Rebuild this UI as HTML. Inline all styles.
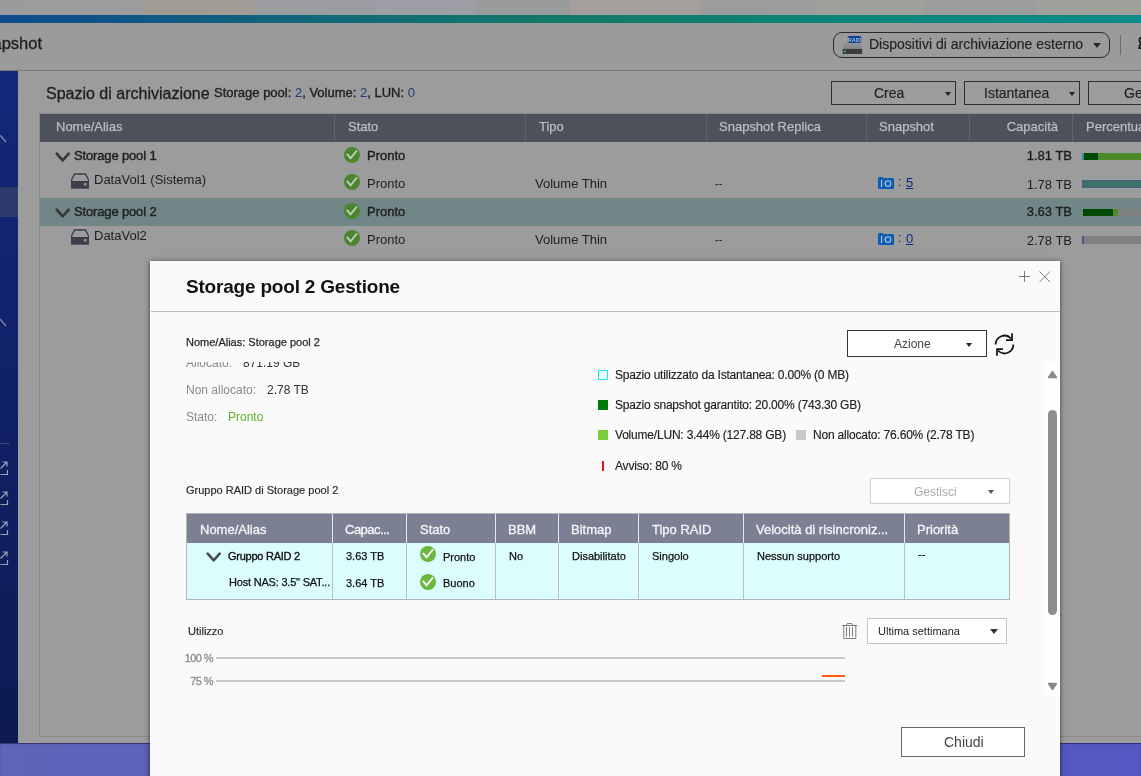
<!DOCTYPE html>
<html><head><meta charset="utf-8">
<style>
*{box-sizing:border-box;margin:0;padding:0}
html,body{width:1141px;height:776px;overflow:hidden;font-family:"Liberation Sans",sans-serif;background:#9b9b9b}
.b{position:absolute}
.t{position:absolute;white-space:nowrap}
#page{position:absolute;left:0;top:0;width:1141px;height:776px;overflow:hidden;will-change:transform}
</style></head>
<body><div id="page">
<div class="b" style="left:0px;top:0px;width:1141px;height:15px;background:#9a9b9d"></div><div class="b" style="left:25px;top:0px;width:120px;height:15px;background:#9b9c9e"></div><div class="b" style="left:145px;top:0px;width:110px;height:15px;background:#a09b95"></div><div class="b" style="left:255px;top:0px;width:115px;height:15px;background:#9b9c9f"></div><div class="b" style="left:370px;top:0px;width:105px;height:15px;background:#9d9da6"></div><div class="b" style="left:475px;top:0px;width:95px;height:15px;background:#9a9b9d"></div><div class="b" style="left:570px;top:0px;width:130px;height:15px;background:#a49e9d"></div><div class="b" style="left:700px;top:0px;width:115px;height:15px;background:#9a9c9e"></div><div class="b" style="left:815px;top:0px;width:110px;height:15px;background:#9ea09a"></div><div class="b" style="left:925px;top:0px;width:110px;height:15px;background:#9a9c9e"></div><div class="b" style="left:1035px;top:0px;width:106px;height:15px;background:#9fa09b"></div><div class="b" style="left:0px;top:15px;width:1141px;height:8px;background:linear-gradient(90deg,#0f4a8e 0%,#116a78 30%,#127a66 50%,#0c8578 75%,#0a8c8c 100%)"></div><div class="b" style="left:0px;top:23px;width:1141px;height:48px;background:#9b9b9b"></div><div class="b" style="left:0px;top:70px;width:1141px;height:1px;background:#7a7a7a"></div><div class="b" style="left:833px;top:32px;width:277px;height:26px;border:1px solid #2a2a2a;border-radius:9px"></div><div class="b" style="left:1093px;top:43px;width:0;height:0;border-left:4px solid transparent;border-right:4px solid transparent;border-top:5px solid #2a2a2a"></div><div class="b" style="left:1120px;top:35px;width:1px;height:20px;background:#6e6a66"></div><svg class="b" style="left:1136px;top:35px" width="8" height="15" viewBox="0 0 8 15"><circle cx="6" cy="5.2" r="2.6" fill="none" stroke="#111" stroke-width="1.7"/><path d="M3.3 13.2 Q3.3 8.6 6 8.6 Q8.7 8.6 8.7 13.2 Z" fill="none" stroke="#111" stroke-width="1.7"/></svg><svg class="b" style="left:842px;top:36px" width="21" height="19" viewBox="0 0 21 19"><defs><linearGradient id="dg" x1="0" y1="0" x2="0" y2="1"><stop offset="0" stop-color="#a2a6aa"/><stop offset="1" stop-color="#7e8286"/></linearGradient></defs><path d="M2.2 2.7 H18.8 L20 13 H0.8 Z" fill="url(#dg)"/><rect x="0.7" y="13" width="19.5" height="5" fill="#3a3b3d"/><rect x="2" y="14.7" width="2" height="1.6" fill="#4fb83a"/><rect x="5.8" y="0" width="13.5" height="7" rx="1.8" fill="#0b3f8f"/><text x="12.5" y="5.6" font-family="Liberation Sans" font-size="5.5" font-weight="bold" fill="#aab8d6" text-anchor="middle">RAID</text></svg><div class="b" style="left:0px;top:71px;width:18px;height:673px;background:linear-gradient(180deg,#13287a 0%,#112166 50%,#0d1a52 100%)"></div><div class="b" style="left:0px;top:187px;width:18px;height:30px;background:#2d3a6e"></div><svg class="b" style="left:0;top:130px" width="10" height="16"><path d="M-1 4 L6 12" stroke="#8f95ad" stroke-width="1.2"/></svg><svg class="b" style="left:0;top:314px" width="10" height="16"><path d="M-1 4 L6 12" stroke="#8f95ad" stroke-width="1.2"/></svg><div class="b" style="left:0px;top:443px;width:10px;height:1px;background:#3a4570"></div><svg class="b" style="left:0;top:461px" width="10" height="14"><path d="M0.5 13.5 H7.5 V9 M0.5 7.5 L7 1 M2.5 1 H7 V5.5" fill="none" stroke="#9ea3b8" stroke-width="1.2"/></svg><svg class="b" style="left:0;top:491px" width="10" height="14"><path d="M0.5 13.5 H7.5 V9 M0.5 7.5 L7 1 M2.5 1 H7 V5.5" fill="none" stroke="#9ea3b8" stroke-width="1.2"/></svg><svg class="b" style="left:0;top:521px" width="10" height="14"><path d="M0.5 13.5 H7.5 V9 M0.5 7.5 L7 1 M2.5 1 H7 V5.5" fill="none" stroke="#9ea3b8" stroke-width="1.2"/></svg><svg class="b" style="left:0;top:551px" width="10" height="14"><path d="M0.5 13.5 H7.5 V9 M0.5 7.5 L7 1 M2.5 1 H7 V5.5" fill="none" stroke="#9ea3b8" stroke-width="1.2"/></svg><div class="b" style="left:18px;top:71px;width:1123px;height:673px;background:#9c9c9c"></div><div class="b" style="left:39px;top:113px;width:1102px;height:624px;border:1px solid #8a8a8a;border-right:none"></div><div class="b" style="left:831px;top:81px;width:125px;height:24px;border:1px solid #2e2e2e"></div><div class="b" style="left:964px;top:81px;width:116px;height:24px;border:1px solid #2e2e2e"></div><div class="b" style="left:1088px;top:81px;width:80px;height:24px;border:1px solid #2e2e2e"></div><div class="b" style="left:945px;top:92px;width:0;height:0;border-left:3px solid transparent;border-right:3px solid transparent;border-top:4px solid #222"></div><div class="b" style="left:1069px;top:92px;width:0;height:0;border-left:3px solid transparent;border-right:3px solid transparent;border-top:4px solid #222"></div><div class="b" style="left:40px;top:114px;width:1101px;height:28px;background:#4c515b"></div><div class="b" style="left:334px;top:114px;width:1px;height:28px;background:#5f646d"></div><div class="b" style="left:525px;top:114px;width:1px;height:28px;background:#5f646d"></div><div class="b" style="left:706px;top:114px;width:1px;height:28px;background:#5f646d"></div><div class="b" style="left:866px;top:114px;width:1px;height:28px;background:#5f646d"></div><div class="b" style="left:969px;top:114px;width:1px;height:28px;background:#5f646d"></div><div class="b" style="left:1072px;top:114px;width:1px;height:28px;background:#5f646d"></div><div class="b" style="left:40px;top:198px;width:1101px;height:28px;background:#718787"></div><svg class="b" style="left:344px;top:147px" width="16" height="16" viewBox="0 0 16 16"><circle cx="8" cy="8" r="8" fill="#4a8530"/><path d="M3.3 7.4 L6.6 11.4 L12.5 4" stroke="#c3d3bb" stroke-width="1.8" fill="none" stroke-linecap="round" stroke-linejoin="miter"/></svg><svg class="b" style="left:55px;top:151px" width="16" height="12" viewBox="0 0 16 12"><path d="M1.7 2.7 L7.7 9.4 L13.7 2.7" stroke="#383838" stroke-width="2.7" fill="none" stroke-linecap="round" stroke-linejoin="round"/></svg><svg class="b" style="left:344px;top:174px" width="16" height="16" viewBox="0 0 16 16"><circle cx="8" cy="8" r="8" fill="#4a8530"/><path d="M3.3 7.4 L6.6 11.4 L12.5 4" stroke="#c3d3bb" stroke-width="1.8" fill="none" stroke-linecap="round" stroke-linejoin="miter"/></svg><svg class="b" style="left:71px;top:173px" width="18" height="16" viewBox="0 0 18 16"><path d="M3.5 1 L14.5 1 L17.5 7 L17.5 15 L0.5 15 L0.5 7 Z" fill="none" stroke="#3b3f4a" stroke-width="1.3"/><rect x="0.5" y="8" width="17" height="7" fill="#3b3f4a"/><rect x="13" y="10" width="2.5" height="2.5" fill="#9c9c9c"/></svg><svg class="b" style="left:344px;top:203px" width="16" height="16" viewBox="0 0 16 16"><circle cx="8" cy="8" r="8" fill="#4a8530"/><path d="M3.3 7.4 L6.6 11.4 L12.5 4" stroke="#c3d3bb" stroke-width="1.8" fill="none" stroke-linecap="round" stroke-linejoin="miter"/></svg><svg class="b" style="left:55px;top:207px" width="16" height="12" viewBox="0 0 16 12"><path d="M1.7 2.7 L7.7 9.4 L13.7 2.7" stroke="#383838" stroke-width="2.7" fill="none" stroke-linecap="round" stroke-linejoin="round"/></svg><svg class="b" style="left:344px;top:230px" width="16" height="16" viewBox="0 0 16 16"><circle cx="8" cy="8" r="8" fill="#4a8530"/><path d="M3.3 7.4 L6.6 11.4 L12.5 4" stroke="#c3d3bb" stroke-width="1.8" fill="none" stroke-linecap="round" stroke-linejoin="miter"/></svg><svg class="b" style="left:71px;top:229px" width="18" height="16" viewBox="0 0 18 16"><path d="M3.5 1 L14.5 1 L17.5 7 L17.5 15 L0.5 15 L0.5 7 Z" fill="none" stroke="#3b3f4a" stroke-width="1.3"/><rect x="0.5" y="8" width="17" height="7" fill="#3b3f4a"/><rect x="13" y="10" width="2.5" height="2.5" fill="#9c9c9c"/></svg><svg class="b" style="left:878px;top:177px" width="16" height="12" viewBox="0 0 16 12"><path d="M0 1.2 Q0 0 1.2 0 L4.5 0 L5.5 1 L15 1 Q16 1 16 2 L16 11 Q16 12 15 12 L1 12 Q0 12 0 11 Z" fill="#0f5cb4"/><rect x="3" y="3" width="1.1" height="7" fill="#b9c6da"/><circle cx="10" cy="6.5" r="2.8" fill="none" stroke="#b9c6da" stroke-width="1.1"/></svg><svg class="b" style="left:878px;top:233px" width="16" height="12" viewBox="0 0 16 12"><path d="M0 1.2 Q0 0 1.2 0 L4.5 0 L5.5 1 L15 1 Q16 1 16 2 L16 11 Q16 12 15 12 L1 12 Q0 12 0 11 Z" fill="#0f5cb4"/><rect x="3" y="3" width="1.1" height="7" fill="#b9c6da"/><circle cx="10" cy="6.5" r="2.8" fill="none" stroke="#b9c6da" stroke-width="1.1"/></svg><div class="b" style="left:1082px;top:153px;width:2px;height:7px;background:#2196a6"></div><div class="b" style="left:1084px;top:153px;width:14px;height:7px;background:#004a00"></div><div class="b" style="left:1098px;top:153px;width:43px;height:7px;background:#4e8a2a"></div><div class="b" style="left:1082px;top:180px;width:70px;height:8px;background:#3d7366;border:1px solid #4a5a8f"></div><div class="b" style="left:1083px;top:209px;width:30px;height:7px;background:#004a00"></div><div class="b" style="left:1113px;top:209px;width:5px;height:7px;background:#4e8a2a"></div><div class="b" style="left:1118px;top:209px;width:23px;height:7px;background:#808080"></div><div class="b" style="left:1082px;top:236px;width:2px;height:8px;background:#4a5a8f"></div><div class="b" style="left:1084px;top:236px;width:57px;height:8px;background:#808080"></div><div class="b" style="left:0px;top:743px;width:1141px;height:33px;background:linear-gradient(90deg,#5e64b8,#5a60bc 50%,#5358c2);box-shadow:inset 0 1px 1px rgba(0,0,40,0.5)"></div>
<div class="t" style="left:-7.5px;top:35px;font-size:16.5px;line-height:16px;color:#1e1e1e;-webkit-text-stroke:0.3px #1e1e1e">apshot</div><div class="t" style="left:869px;top:37px;font-size:14px;line-height:14px;font-weight:normal;color:#222;-webkit-text-stroke:0.15px #222">Dispositivi di archiviazione esterno</div><div class="t" style="left:46px;top:86px;font-size:16px;line-height:16px;font-weight:normal;color:#1e1e1e;-webkit-text-stroke:0.3px #1e1e1e">Spazio di archiviazione</div><div class="t" style="left:214px;top:86px;font-size:13px;line-height:13px;color:#1e1e1e;-webkit-text-stroke:0.35px #1e1e1e">Storage pool: <span style="color:#1d3978;-webkit-text-stroke:0">2</span>, Volume: <span style="color:#1d3978;-webkit-text-stroke:0">2</span>, LUN: <span style="color:#1d3978;-webkit-text-stroke:0">0</span></div><div class="t" style="left:874px;top:86px;font-size:14px;line-height:14px;font-weight:normal;color:#222;-webkit-text-stroke:0.15px #222">Crea</div><div class="t" style="left:984px;top:86px;font-size:14px;line-height:14px;font-weight:normal;color:#222;-webkit-text-stroke:0.15px #222">Istantanea</div><div class="t" style="left:1124px;top:86px;font-size:14px;line-height:14px;font-weight:normal;color:#222;-webkit-text-stroke:0.15px #222">Ge</div><div class="t" style="left:56px;top:120px;font-size:13px;line-height:13px;font-weight:normal;color:#bcbec2;-webkit-text-stroke:0.25px #bcbec2">Nome/Alias</div><div class="t" style="left:348px;top:120px;font-size:13px;line-height:13px;font-weight:normal;color:#bcbec2;-webkit-text-stroke:0.25px #bcbec2">Stato</div><div class="t" style="left:539px;top:120px;font-size:13px;line-height:13px;font-weight:normal;color:#bcbec2;-webkit-text-stroke:0.25px #bcbec2">Tipo</div><div class="t" style="left:719px;top:120px;font-size:13px;line-height:13px;font-weight:normal;color:#bcbec2;-webkit-text-stroke:0.25px #bcbec2">Snapshot Replica</div><div class="t" style="left:879px;top:120px;font-size:13px;line-height:13px;font-weight:normal;color:#bcbec2;-webkit-text-stroke:0.25px #bcbec2">Snapshot</div><div class="t" style="left:958px;top:120px;width:100px;text-align:right;font-size:13px;line-height:13px;color:#bcbec2;-webkit-text-stroke:0.25px #bcbec2">Capacità</div><div class="t" style="left:1086px;top:120px;font-size:13px;line-height:13px;font-weight:normal;color:#bcbec2;-webkit-text-stroke:0.25px #bcbec2">Percentuale</div><div class="t" style="left:74px;top:149px;font-size:13px;line-height:13px;font-weight:normal;color:#1e1e1e;letter-spacing:-0.15px;-webkit-text-stroke:0.4px #1e1e1e">Storage pool 1</div><div class="t" style="left:367px;top:149px;font-size:13px;line-height:13px;font-weight:normal;color:#1e1e1e;-webkit-text-stroke:0.4px #1e1e1e">Pronto</div><div class="t" style="left:94px;top:173px;font-size:13px;line-height:13px;font-weight:normal;color:#1e1e1e;">DataVol1 (Sistema)</div><div class="t" style="left:367px;top:177px;font-size:13px;line-height:13px;font-weight:normal;color:#1e1e1e;">Pronto</div><div class="t" style="left:535px;top:177px;font-size:13px;line-height:13px;font-weight:normal;color:#1e1e1e;">Volume Thin</div><div class="t" style="left:715px;top:178px;font-size:11px;line-height:11px;font-weight:normal;color:#1e1e1e;">--</div><div class="t" style="left:74px;top:205px;font-size:13px;line-height:13px;font-weight:normal;color:#1e1e1e;letter-spacing:-0.15px;-webkit-text-stroke:0.4px #1e1e1e">Storage pool 2</div><div class="t" style="left:367px;top:205px;font-size:13px;line-height:13px;font-weight:normal;color:#1e1e1e;-webkit-text-stroke:0.4px #1e1e1e">Pronto</div><div class="t" style="left:94px;top:229px;font-size:13px;line-height:13px;font-weight:normal;color:#1e1e1e;">DataVol2</div><div class="t" style="left:367px;top:233px;font-size:13px;line-height:13px;font-weight:normal;color:#1e1e1e;">Pronto</div><div class="t" style="left:535px;top:233px;font-size:13px;line-height:13px;font-weight:normal;color:#1e1e1e;">Volume Thin</div><div class="t" style="left:715px;top:234px;font-size:11px;line-height:11px;font-weight:normal;color:#1e1e1e;">--</div><div class="t" style="left:898px;top:176px;font-size:12px;line-height:12px;font-weight:normal;color:#1e1e1e;">:</div><div class="t" style="left:906px;top:176px;font-size:13px;line-height:13px;font-weight:normal;color:#10288a;"><u>5</u></div><div class="t" style="left:898px;top:232px;font-size:12px;line-height:12px;font-weight:normal;color:#1e1e1e;">:</div><div class="t" style="left:906px;top:232px;font-size:13px;line-height:13px;font-weight:normal;color:#10288a;"><u>0</u></div><div class="t" style="left:971px;top:149px;width:101px;text-align:right;font-size:13px;line-height:13px;color:#1e1e1e;-webkit-text-stroke:0.35px #1e1e1e">1.81 TB</div><div class="t" style="left:971px;top:178px;width:101px;text-align:right;font-size:13px;line-height:13px;color:#1e1e1e;">1.78 TB</div><div class="t" style="left:971px;top:205px;width:101px;text-align:right;font-size:13px;line-height:13px;color:#1e1e1e;-webkit-text-stroke:0.35px #1e1e1e">3.63 TB</div><div class="t" style="left:971px;top:234px;width:101px;text-align:right;font-size:13px;line-height:13px;color:#1e1e1e;">2.78 TB</div>
<div class="b" style="left:150px;top:261px;width:910px;height:520px;background:#fafafa;box-shadow:0 1px 4px rgba(0,0,0,0.6),0 0 9px rgba(0,0,0,0.12);border:1px solid #fdfdfd"></div><svg class="b" style="left:1019px;top:271px" width="32" height="12" viewBox="0 0 32 12"><path d="M5.5 0 V11 M0 5.5 H11" stroke="#7a7a7a" stroke-width="1"/><path d="M20.5 0.5 L31 11 M31 0.5 L20.5 11" stroke="#7a7a7a" stroke-width="1"/></svg><div class="b" style="left:151px;top:311px;width:909px;height:1px;background:#bdbdbd"></div><div class="b" style="left:847px;top:330px;width:140px;height:27px;background:#fff;border:1px solid #333"></div><div class="b" style="left:966px;top:343px;width:0;height:0;border-left:3px solid transparent;border-right:3px solid transparent;border-top:4px solid #222"></div><svg class="b" style="left:994px;top:332px" width="24" height="26" viewBox="0 0 24 26"><path d="M1.7 12.5 A8.8 8.8 0 0 1 17 6.5" fill="none" stroke="#151515" stroke-width="1.75"/><path d="M18 1.2 V8 H12" fill="none" stroke="#151515" stroke-width="1.75"/><path d="M19.3 12.5 A8.8 8.8 0 0 1 4 18.5" fill="none" stroke="#151515" stroke-width="1.75"/><path d="M3 23.8 V17 H9" fill="none" stroke="#151515" stroke-width="1.75"/></svg><div class="b" style="left:151px;top:362px;width:894px;height:340px;overflow:hidden"><div class="t" style="left:35px;top:-5px;font-size:12px;line-height:12px;font-weight:normal;color:#8a8a8a;">Allocato:</div><div class="t" style="left:92px;top:-5px;font-size:12px;line-height:12px;font-weight:normal;color:#333;">871.19 GB</div><div class="t" style="left:35px;top:22px;font-size:12px;line-height:12px;font-weight:normal;color:#8a8a8a;">Non allocato:</div><div class="t" style="left:116px;top:22px;font-size:12px;line-height:12px;font-weight:normal;color:#333;">2.78 TB</div><div class="t" style="left:35px;top:49px;font-size:12px;line-height:12px;font-weight:normal;color:#8a8a8a;">Stato:</div><div class="t" style="left:77px;top:49px;font-size:12px;line-height:12px;font-weight:normal;color:#5fae2e;">Pronto</div></div><div class="b" style="left:598px;top:370px;width:10px;height:10px;border:1px solid #19e6ee;background:#f0fcff"></div><div class="b" style="left:598px;top:400px;width:10px;height:10px;background:#007a0a"></div><div class="b" style="left:598px;top:430px;width:10px;height:10px;background:#7ccd3c"></div><div class="b" style="left:796px;top:430px;width:10px;height:10px;background:#c8c8c8"></div><div class="b" style="left:602px;top:461px;width:2px;height:10px;background:#e8141e"></div><div class="b" style="left:870px;top:478px;width:140px;height:26px;background:#fff;border:1px solid #cfcfcf"></div><div class="b" style="left:988px;top:490px;width:0;height:0;border-left:3px solid transparent;border-right:3px solid transparent;border-top:4px solid #555"></div><div class="b" style="left:186px;top:513px;width:824px;height:87px;background:#dcfdfd;border:1px solid #b4b4b4"></div><div class="b" style="left:187px;top:514px;width:822px;height:29px;background:#7b8093"></div><div class="b" style="left:332px;top:514px;width:1px;height:29px;background:#e8e8ee"></div><div class="b" style="left:332px;top:543px;width:1px;height:56px;background:#bdbdbd"></div><div class="b" style="left:406px;top:514px;width:1px;height:29px;background:#e8e8ee"></div><div class="b" style="left:406px;top:543px;width:1px;height:56px;background:#bdbdbd"></div><div class="b" style="left:495px;top:514px;width:1px;height:29px;background:#e8e8ee"></div><div class="b" style="left:495px;top:543px;width:1px;height:56px;background:#bdbdbd"></div><div class="b" style="left:558px;top:514px;width:1px;height:29px;background:#e8e8ee"></div><div class="b" style="left:558px;top:543px;width:1px;height:56px;background:#bdbdbd"></div><div class="b" style="left:638px;top:514px;width:1px;height:29px;background:#e8e8ee"></div><div class="b" style="left:638px;top:543px;width:1px;height:56px;background:#bdbdbd"></div><div class="b" style="left:743px;top:514px;width:1px;height:29px;background:#e8e8ee"></div><div class="b" style="left:743px;top:543px;width:1px;height:56px;background:#bdbdbd"></div><div class="b" style="left:904px;top:514px;width:1px;height:29px;background:#e8e8ee"></div><div class="b" style="left:904px;top:543px;width:1px;height:56px;background:#bdbdbd"></div><svg class="b" style="left:206px;top:551px" width="16" height="12" viewBox="0 0 16 12"><path d="M1.7 2.7 L7.7 9.4 L13.7 2.7" stroke="#4a4a4a" stroke-width="2.5" fill="none" stroke-linecap="round" stroke-linejoin="round"/></svg><svg class="b" style="left:420px;top:546px" width="16" height="16" viewBox="0 0 16 16"><circle cx="8" cy="8" r="8" fill="#6cb83e"/><path d="M3.3 7.4 L6.6 11.4 L12.5 4" stroke="#ffffff" stroke-width="1.8" fill="none" stroke-linecap="round" stroke-linejoin="miter"/></svg><svg class="b" style="left:420px;top:574px" width="16" height="16" viewBox="0 0 16 16"><circle cx="8" cy="8" r="8" fill="#6cb83e"/><path d="M3.3 7.4 L6.6 11.4 L12.5 4" stroke="#ffffff" stroke-width="1.8" fill="none" stroke-linecap="round" stroke-linejoin="miter"/></svg><svg class="b" style="left:842px;top:622px" width="16" height="18" viewBox="0 0 16 18"><path d="M0 3.5 H15 M4.3 3.5 L5.2 1.5 H9.8 L10.7 3.5 M1.8 3.5 V16.5 H13.8 V3.5 M4.5 5 V14.7 M7.5 5 V14.7 M10.5 5 V14.7" fill="none" stroke="#7d7d7d" stroke-width="1"/></svg><div class="b" style="left:867px;top:618px;width:140px;height:26px;background:#fff;border:1px solid #c4c4c4"></div><div class="b" style="left:990px;top:629px;width:0;height:0;border-left:4px solid transparent;border-right:4px solid transparent;border-top:5px solid #333"></div><div class="b" style="left:216px;top:657px;width:629px;height:2px;background:#c8c8c8"></div><div class="b" style="left:216px;top:680px;width:629px;height:2px;background:#c8c8c8"></div><div class="b" style="left:822px;top:675px;width:23px;height:2px;background:#ff5a10"></div><div class="b" style="left:1045px;top:363px;width:15px;height:333px;background:#fefefe"></div><svg class="b" style="left:1047px;top:370px" width="11" height="9"><path d="M1.5 7.5 L5.5 1.5 L9.5 7.5 Z" fill="#8a8a8a" stroke="#8a8a8a" stroke-width="1.4" stroke-linejoin="round"/></svg><div class="b" style="left:1048px;top:410px;width:9px;height:205px;background:#8e8e8e;border-radius:5px"></div><svg class="b" style="left:1047px;top:682px" width="11" height="9"><path d="M1.5 1.5 L5.5 7.5 L9.5 1.5 Z" fill="#8a8a8a" stroke="#8a8a8a" stroke-width="1.4" stroke-linejoin="round"/></svg><div class="b" style="left:901px;top:727px;width:124px;height:30px;background:#fff;border:1px solid #666"></div><div class="t" style="left:186px;top:277px;font-size:19px;line-height:19px;font-weight:bold;color:#111;letter-spacing:-0.2px">Storage pool 2 Gestione</div><div class="t" style="left:186px;top:337px;font-size:11px;line-height:11px;font-weight:normal;color:#2a2a2a;-webkit-text-stroke:0.25px #2a2a2a">Nome/Alias: Storage pool 2</div><div class="t" style="left:894px;top:338px;font-size:12px;line-height:12px;font-weight:normal;color:#444;">Azione</div><div class="t" style="left:615px;top:369px;font-size:12px;line-height:12px;font-weight:normal;color:#222;letter-spacing:-0.2px;-webkit-text-stroke:0.15px #222">Spazio utilizzato da Istantanea: 0.00% (0 MB)</div><div class="t" style="left:615px;top:399px;font-size:12px;line-height:12px;font-weight:normal;color:#222;letter-spacing:-0.2px;-webkit-text-stroke:0.15px #222">Spazio snapshot garantito: 20.00% (743.30 GB)</div><div class="t" style="left:615px;top:429px;font-size:12px;line-height:12px;font-weight:normal;color:#222;letter-spacing:-0.2px;-webkit-text-stroke:0.15px #222">Volume/LUN: 3.44% (127.88 GB)</div><div class="t" style="left:813px;top:429px;font-size:12px;line-height:12px;font-weight:normal;color:#222;letter-spacing:-0.2px;-webkit-text-stroke:0.15px #222">Non allocato: 76.60% (2.78 TB)</div><div class="t" style="left:615px;top:460px;font-size:12px;line-height:12px;font-weight:normal;color:#222;letter-spacing:-0.2px;-webkit-text-stroke:0.15px #222">Avviso: 80 %</div><div class="t" style="left:186px;top:485px;font-size:11px;line-height:11px;font-weight:normal;color:#2e2e2e;-webkit-text-stroke:0.2px #2e2e2e">Gruppo RAID di Storage pool 2</div><div class="t" style="left:914px;top:486px;font-size:12px;line-height:12px;font-weight:normal;color:#aaa;">Gestisci</div><div class="t" style="left:200px;top:523px;font-size:13px;line-height:13px;font-weight:normal;color:#f6f6f8;-webkit-text-stroke:0.3px #f6f6f8">Nome/Alias</div><div class="t" style="left:345px;top:523px;font-size:13px;line-height:13px;font-weight:normal;color:#f6f6f8;letter-spacing:-0.5px;-webkit-text-stroke:0.3px #f6f6f8">Capac...</div><div class="t" style="left:420px;top:523px;font-size:13px;line-height:13px;font-weight:normal;color:#f6f6f8;-webkit-text-stroke:0.3px #f6f6f8">Stato</div><div class="t" style="left:508px;top:523px;font-size:13px;line-height:13px;font-weight:normal;color:#f6f6f8;-webkit-text-stroke:0.3px #f6f6f8">BBM</div><div class="t" style="left:571px;top:523px;font-size:13px;line-height:13px;font-weight:normal;color:#f6f6f8;-webkit-text-stroke:0.3px #f6f6f8">Bitmap</div><div class="t" style="left:652px;top:523px;font-size:13px;line-height:13px;font-weight:normal;color:#f6f6f8;-webkit-text-stroke:0.3px #f6f6f8">Tipo RAID</div><div class="t" style="left:756px;top:523px;font-size:13px;line-height:13px;font-weight:normal;color:#f6f6f8;-webkit-text-stroke:0.3px #f6f6f8">Velocità di risincroniz...</div><div class="t" style="left:917px;top:523px;font-size:13px;line-height:13px;font-weight:normal;color:#f6f6f8;-webkit-text-stroke:0.3px #f6f6f8">Priorità</div><div class="t" style="left:228px;top:551px;font-size:11px;line-height:11px;font-weight:normal;color:#111;letter-spacing:-0.25px;-webkit-text-stroke:0.35px #111">Gruppo RAID 2</div><div class="t" style="left:229px;top:577px;font-size:11px;line-height:11px;font-weight:normal;color:#111;letter-spacing:-0.2px;-webkit-text-stroke:0.25px #111">Host NAS: 3.5" SAT...</div><div class="t" style="left:346px;top:551px;font-size:11px;line-height:11px;font-weight:normal;color:#111;-webkit-text-stroke:0.25px #111">3.63 TB</div><div class="t" style="left:346px;top:578px;font-size:11px;line-height:11px;font-weight:normal;color:#111;-webkit-text-stroke:0.25px #111">3.64 TB</div><div class="t" style="left:443px;top:552px;font-size:11px;line-height:11px;font-weight:normal;color:#111;-webkit-text-stroke:0.25px #111">Pronto</div><div class="t" style="left:443px;top:578px;font-size:11px;line-height:11px;font-weight:normal;color:#111;-webkit-text-stroke:0.25px #111">Buono</div><div class="t" style="left:509px;top:551px;font-size:11px;line-height:11px;font-weight:normal;color:#111;-webkit-text-stroke:0.25px #111">No</div><div class="t" style="left:572px;top:551px;font-size:11px;line-height:11px;font-weight:normal;color:#111;-webkit-text-stroke:0.25px #111">Disabilitato</div><div class="t" style="left:652px;top:551px;font-size:11px;line-height:11px;font-weight:normal;color:#111;-webkit-text-stroke:0.25px #111">Singolo</div><div class="t" style="left:757px;top:551px;font-size:11px;line-height:11px;font-weight:normal;color:#111;-webkit-text-stroke:0.25px #111">Nessun supporto</div><div class="t" style="left:918px;top:549px;font-size:11px;line-height:11px;font-weight:normal;color:#111;-webkit-text-stroke:0.25px #111">--</div><div class="t" style="left:188px;top:626px;font-size:11px;line-height:11px;font-weight:normal;color:#2e2e2e;-webkit-text-stroke:0.2px #2e2e2e">Utilizzo</div><div class="t" style="left:878px;top:626px;font-size:11px;line-height:11px;font-weight:normal;color:#222;">Ultima settimana</div><div class="t" style="left:150px;top:653px;width:63px;text-align:right;font-size:11px;line-height:11px;color:#8c8c8c;letter-spacing:-0.6px;-webkit-text-stroke:0.3px #8c8c8c">100 %</div><div class="t" style="left:150px;top:676px;width:63px;text-align:right;font-size:11px;line-height:11px;color:#8c8c8c;letter-spacing:-0.6px;-webkit-text-stroke:0.3px #8c8c8c">75 %</div><div class="t" style="left:944px;top:735px;font-size:14px;line-height:14px;font-weight:normal;color:#444;">Chiudi</div>
</div></body></html>
